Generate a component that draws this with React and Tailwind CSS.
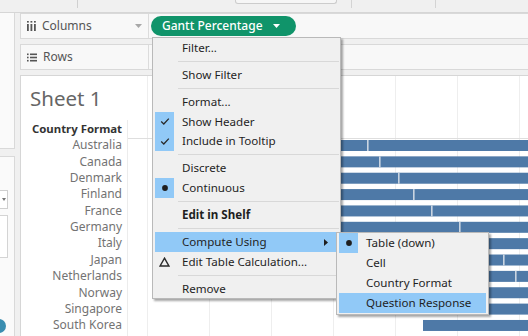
import React from "react";

const countries = ["Australia","Canada","Denmark","Finland","France","Germany","Italy","Japan","Netherlands","Norway","Singapore","South Korea"];

const bars = [
  { s: 172, d: 239 }, { s: 172, d: 251 }, { s: 172, d: 270 }, { s: 172, d: 285 },
  { s: 172, d: 303 }, { s: 172, d: 331 }, { s: 202, d: 347 }, { s: 222, d: 375 },
  { s: 242, d: 387 }, { s: 262, d: null }, { s: 282, d: null }, { s: 295, d: null },
  { s: 308, d: null },
];

function Check() {
  return (
    <svg width="10" height="9" viewBox="0 0 10 9">
      <path d="M1.2 4.6 L3.8 7 L8.8 1.6" fill="none" stroke="#2a2a2a" strokeWidth="1.3" />
    </svg>
  );
}
function Dot() {
  return (
    <svg width="8" height="8" viewBox="0 0 8 8">
      <circle cx="4" cy="4" r="2.9" fill="#1e1e1e" />
    </svg>
  );
}
function Delta() {
  return (
    <svg width="11" height="10" viewBox="0 0 11 10">
      <path d="M5.5 1.2 L9.9 9 L1.1 9 Z" fill="none" stroke="#2a2a2a" strokeWidth="1.4" strokeLinejoin="miter" />
    </svg>
  );
}

function Item({ icon, iconBox, label, bold, highlight, arrow, h }) {
  return (
    <div className={`relative mx-[2px] flex items-center ${h === 20 ? "h-[20px]" : "h-[19.6px]"} ${highlight ? "bg-[#91c9f7]" : ""}`}>
      <div className={`flex h-full w-[19px] items-center justify-center ${iconBox ? "bg-[#91c9f7]" : ""}`}>{icon}</div>
      <span className={`ml-[8px] whitespace-nowrap text-[#1f1f1f] ${bold ? "font-bold" : ""}`}>{label}</span>
      {arrow && (
        <svg className="absolute right-[10px] top-[7px]" width="4" height="7" viewBox="0 0 4 7">
          <path d="M0 0 L4 3.5 L0 7 Z" fill="#1e1e1e" />
        </svg>
      )}
    </div>
  );
}

function Sep() {
  return (
    <div className="flex h-[7.4px] items-center pl-[25px] pr-[1px]">
      <div className="h-px w-full bg-[#d8d8d8]" />
    </div>
  );
}

function ColumnsIcon() {
  return (
    <svg width="9" height="10" viewBox="0 0 9 10">
      <rect x="0" y="0" width="1.8" height="1.6" fill="#555" />
      <rect x="3.5" y="0" width="1.8" height="1.6" fill="#555" />
      <rect x="7" y="0" width="1.8" height="1.6" fill="#555" />
      <rect x="0" y="3" width="1.8" height="7" fill="#555" />
      <rect x="3.5" y="3" width="1.8" height="7" fill="#555" />
      <rect x="7" y="3" width="1.8" height="7" fill="#555" />
    </svg>
  );
}
function RowsIcon() {
  return (
    <svg width="10" height="9" viewBox="0 0 10 9">
      <rect x="0" y="0.5" width="1.6" height="1.6" fill="#555" />
      <rect x="0" y="3.7" width="1.6" height="1.6" fill="#555" />
      <rect x="0" y="6.9" width="1.6" height="1.6" fill="#555" />
      <rect x="3" y="0.5" width="7" height="1.6" fill="#555" />
      <rect x="3" y="3.7" width="7" height="1.6" fill="#555" />
      <rect x="3" y="6.9" width="7" height="1.6" fill="#555" />
    </svg>
  );
}
function SmallDown({ color = "#9a9a9a" }) {
  return (
    <svg width="7" height="4" viewBox="0 0 7 4">
      <path d="M0 0 L7 0 L3.5 4 Z" fill={color} />
    </svg>
  );
}

export default function App() {
  const rowH = 16.36;
  return (
    <div className="relative h-[336px] w-[528px] overflow-hidden bg-[#f0f0f0] font-['Noto_Sans',sans-serif] text-[12px] leading-[16px]">
      {/* top strip */}
      <div className="flex h-[13px] border-b border-[#d6d6d6]">
        <div className="h-[8px] w-[78px] border-r border-[#d0d0d0]" />
        <div className="ml-[157px] h-[4px] w-[102px] rounded-b-[3px] border border-t-0 border-[#cccccc] bg-[#f6f6f6]" />
        <div className="ml-[14px] h-[8px] w-[85px] border-x border-[#d4d4d4]" />
      </div>

      <div className="flex h-[323px]">
        {/* left panel */}
        <div className="flex w-[15px] flex-col">
          <div className="h-[136px] border-b border-r border-[#d9d9d9] bg-[#fafafa]" />
          <div className="relative mt-[7px] flex-1 border-r border-t border-[#d9d9d9] bg-[#fafafa]">
            <div className="mt-[33px] flex h-[19px] w-[8px] items-center justify-end border border-l-0 border-[#cfcfcf] bg-white pr-[1px]">
              <svg width="4" height="3" viewBox="0 0 4 3"><path d="M0 0 L4 0 L2 3 Z" fill="#777" /></svg>
            </div>
            <div className="mt-[6px] h-[43px] w-[8px] border border-l-0 border-[#d4d4d4] bg-white" />
            <div className="absolute left-[-8px] top-[162px] h-[14px] w-[14px] rounded-full bg-[#3a8db0]" />
          </div>
        </div>

        {/* main */}
        <div className="ml-[5px] flex flex-1 flex-col">
          {/* Columns shelf */}
          <div className="flex h-[26px] border border-r-0 border-[#d9d9d9] bg-[#f8f8f8]">
            <div className="flex w-[128px] items-center border-r border-[#dcdcdc] pl-[6px] text-[#555]">
              <ColumnsIcon />
              <span className="ml-[6px]">Columns</span>
              <span className="ml-auto mr-[6px] flex"><SmallDown color="#a8a8a8" /></span>
            </div>
            <div className="ml-[2px] flex items-center">
              <div className="flex h-[20px] w-[145px] items-center rounded-full bg-[#10946a] pl-[11px] text-white">
                <span className="font-medium">Gantt Percentage</span>
                <span className="ml-auto mr-[16px] flex"><SmallDown color="#ffffff" /></span>
              </div>
            </div>
          </div>

          {/* Rows shelf */}
          <div className="mt-[5px] flex h-[26px] border border-r-0 border-[#d9d9d9] bg-[#f8f8f8]">
            <div className="flex w-[128px] items-center border-r border-[#dcdcdc] pl-[6px] text-[#555]">
              <RowsIcon />
              <span className="ml-[6px]">Rows</span>
            </div>
          </div>

          {/* Sheet */}
          <div className="mt-[5px] flex flex-1 border-l border-t border-[#d6d6d6] bg-white">
            <div className="flex w-[107px] flex-col">
              <div className="mt-[7.5px] h-[28px] pl-[9px] text-[20.5px] leading-[28px] text-[#666]">Sheet 1</div>
              <div className="mt-[8.8px] flex-1 border-r border-[#ececec] pr-[5px] text-right">
                <div className="h-[17px] text-[11.4px] font-bold leading-[17px] text-[#333]">Country Format</div>
                {countries.map((c) => (
                  <div key={c} className="h-[16.36px] leading-[16.36px] text-[#737373]">{c}</div>
                ))}
              </div>
            </div>
            <svg width="400" height="260" viewBox="0 0 400 260" className="block">
              {[19, 81, 143, 205, 267, 329, 391].map((x) => (
                <line key={x} x1={x + 0.5} x2={x + 0.5} y1="0" y2="260" stroke="#eeeeee" strokeWidth="1" />
              ))}
              <line x1="0" x2="400" y1="62.5" y2="62.5" stroke="#dedede" strokeWidth="1" />
              {bars.map((b, i) => {
                const y = 64 + i * rowH;
                return (
                  <g key={i}>
                    <rect x={b.s} y={y} width={400 - b.s} height="11" fill="#4e79a7" />
                    {b.d && <rect x={b.d} y={y} width="1.6" height="11" fill="#c9d4e1" />}
                  </g>
                );
              })}
            </svg>
          </div>
        </div>
      </div>

      {/* context menu */}
      <div className="absolute left-[152px] top-[37px] z-10 w-[189px] border border-[#b9b9b9] bg-[#f0f0f0] pt-[0.5px] text-[11.6px] shadow-[2px_2px_2px_rgba(0,0,0,0.35)]">
        <Item label="Filter..." />
        <Sep />
        <Item label="Show Filter" />
        <Sep />
        <Item label="Format..." />
        <Item label="Show Header" icon={<Check />} iconBox />
        <Item label="Include in Tooltip" icon={<Check />} iconBox />
        <Sep />
        <Item label="Discrete" />
        <Item label="Continuous" icon={<Dot />} iconBox />
        <Sep />
        <Item label="Edit in Shelf" bold />
        <Sep />
        <Item label="Compute Using" highlight arrow />
        <Item label="Edit Table Calculation..." icon={<Delta />} />
        <Sep />
        <Item label="Remove" />
      </div>

      {/* submenu */}
      <div className="absolute left-[336px] top-[232px] z-20 w-[153px] border border-[#b9b9b9] bg-[#f0f0f0] pb-[1px] text-[11.6px] shadow-[2px_2px_2px_rgba(0,0,0,0.35)]">
        <Item h={20} label="Table (down)" icon={<Dot />} iconBox />
        <Item h={20} label="Cell" />
        <Item h={20} label="Country Format" />
        <Item h={20} label="Question Response" highlight />
      </div>
    </div>
  );
}
